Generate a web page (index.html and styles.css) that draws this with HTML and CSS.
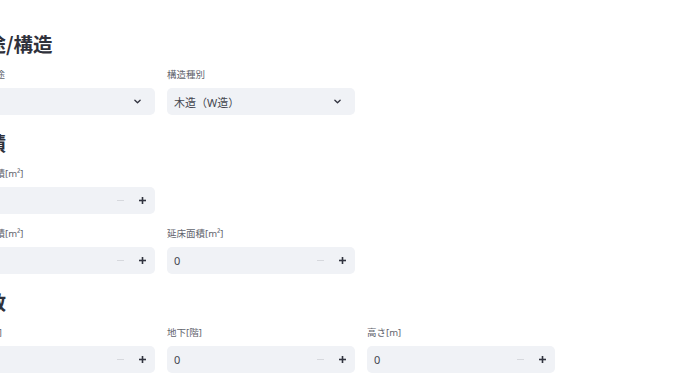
FILE: index.html
```html
<!DOCTYPE html>
<html lang="ja">
<head>
<meta charset="utf-8">
<link rel="stylesheet" href="styles.css">
</head>
<body>
<main class="page">
  <section class="section">
    <h2 class="heading">用途/構造</h2>
    <div class="row">
      <div class="field">
        <div class="label">主要用途</div>
        <div class="box select"><span class="value"></span>
          <svg class="chev" viewBox="0 0 8 5" width="7" height="5"><polyline points="1,1 4,4 7,1"/></svg></div>
      </div>
      <div class="field">
        <div class="label">構造種別</div>
        <div class="box select"><span class="value">木造（W造）</span>
          <svg class="chev" viewBox="0 0 8 5" width="7" height="5"><polyline points="1,1 4,4 7,1"/></svg></div>
      </div>
    </div>
  </section>

  <section class="section">
    <h2 class="heading">面積</h2>
    <div class="row">
      <div class="field">
        <div class="label">敷地面積[m²]</div>
        <div class="box number"><span class="value"></span>
          <svg class="minus" viewBox="0 0 7 7" width="7" height="7"><line x1="0" y1="3.5" x2="7" y2="3.5"/></svg>
          <svg class="plus" viewBox="0 0 7 7" width="7" height="7"><line x1="0" y1="3.5" x2="7" y2="3.5"/><line x1="3.5" y1="0" x2="3.5" y2="7"/></svg></div>
      </div>
    </div>
    <div class="row">
      <div class="field">
        <div class="label">建築面積[m²]</div>
        <div class="box number"><span class="value"></span>
          <svg class="minus" viewBox="0 0 7 7" width="7" height="7"><line x1="0" y1="3.5" x2="7" y2="3.5"/></svg>
          <svg class="plus" viewBox="0 0 7 7" width="7" height="7"><line x1="0" y1="3.5" x2="7" y2="3.5"/><line x1="3.5" y1="0" x2="3.5" y2="7"/></svg></div>
      </div>
      <div class="field">
        <div class="label">延床面積[m²]</div>
        <div class="box number"><span class="value">0</span>
          <svg class="minus" viewBox="0 0 7 7" width="7" height="7"><line x1="0" y1="3.5" x2="7" y2="3.5"/></svg>
          <svg class="plus" viewBox="0 0 7 7" width="7" height="7"><line x1="0" y1="3.5" x2="7" y2="3.5"/><line x1="3.5" y1="0" x2="3.5" y2="7"/></svg></div>
      </div>
    </div>
  </section>

  <section class="section">
    <h2 class="heading">階数</h2>
    <div class="row">
      <div class="field">
        <div class="label">地上[階]</div>
        <div class="box number"><span class="value"></span>
          <svg class="minus" viewBox="0 0 7 7" width="7" height="7"><line x1="0" y1="3.5" x2="7" y2="3.5"/></svg>
          <svg class="plus" viewBox="0 0 7 7" width="7" height="7"><line x1="0" y1="3.5" x2="7" y2="3.5"/><line x1="3.5" y1="0" x2="3.5" y2="7"/></svg></div>
      </div>
      <div class="field">
        <div class="label">地下[階]</div>
        <div class="box number"><span class="value">0</span>
          <svg class="minus" viewBox="0 0 7 7" width="7" height="7"><line x1="0" y1="3.5" x2="7" y2="3.5"/></svg>
          <svg class="plus" viewBox="0 0 7 7" width="7" height="7"><line x1="0" y1="3.5" x2="7" y2="3.5"/><line x1="3.5" y1="0" x2="3.5" y2="7"/></svg></div>
      </div>
      <div class="field">
        <div class="label">高さ[m]</div>
        <div class="box number"><span class="value">0</span>
          <svg class="minus" viewBox="0 0 7 7" width="7" height="7"><line x1="0" y1="3.5" x2="7" y2="3.5"/></svg>
          <svg class="plus" viewBox="0 0 7 7" width="7" height="7"><line x1="0" y1="3.5" x2="7" y2="3.5"/><line x1="3.5" y1="0" x2="3.5" y2="7"/></svg></div>
      </div>
    </div>
  </section>
</main>
</body>
</html>
```

FILE: styles.css
```css
html, body {
  margin: 0;
  padding: 0;
  background: #ffffff;
  overflow: hidden;
}
body {
  font-family: "Noto Sans", "Noto Sans CJK JP", sans-serif;
  color: #31333f;
}
.page {
  margin-left: -33px;
  padding-top: 32px;
  width: 588px;
  display: flex;
  flex-direction: column;
  gap: 16px;
}
.section {
  display: flex;
  flex-direction: column;
  gap: 13px;
}
.heading {
  margin: 0 0 -1px 0;
  height: 24px;
  line-height: 24px;
  font-size: 19.5px;
  font-weight: 700;
  font-family: "Noto Sans CJK JP", sans-serif;
  color: #2f313b;
}
.row {
  display: grid;
  grid-template-columns: repeat(3, 188px);
  column-gap: 12px;
}
.field {
  display: flex;
  flex-direction: column;
  gap: 6px;
}
.label {
  height: 14px;
  line-height: 14px;
  font-size: 9.5px;
  color: #62646d;
}
.box {
  height: 27px;
  background: #f0f2f6;
  border-radius: 5px;
  display: flex;
  align-items: center;
  padding: 0 8px 0 7px;
  box-sizing: border-box;
}
.value {
  flex: 1;
  font-size: 11px;
  color: #44464f;
}
.chev {
  margin-right: 6px;
  fill: none;
  stroke: #31333f;
  stroke-width: 1.5;
  stroke-linecap: round;
  stroke-linejoin: round;
}
.minus {
  margin-right: 15px;
  stroke: #d6d8dd;
  stroke-width: 1;
}
.plus {
  margin-right: 1px;
  stroke: #31333f;
  stroke-width: 1.6;
}
```
